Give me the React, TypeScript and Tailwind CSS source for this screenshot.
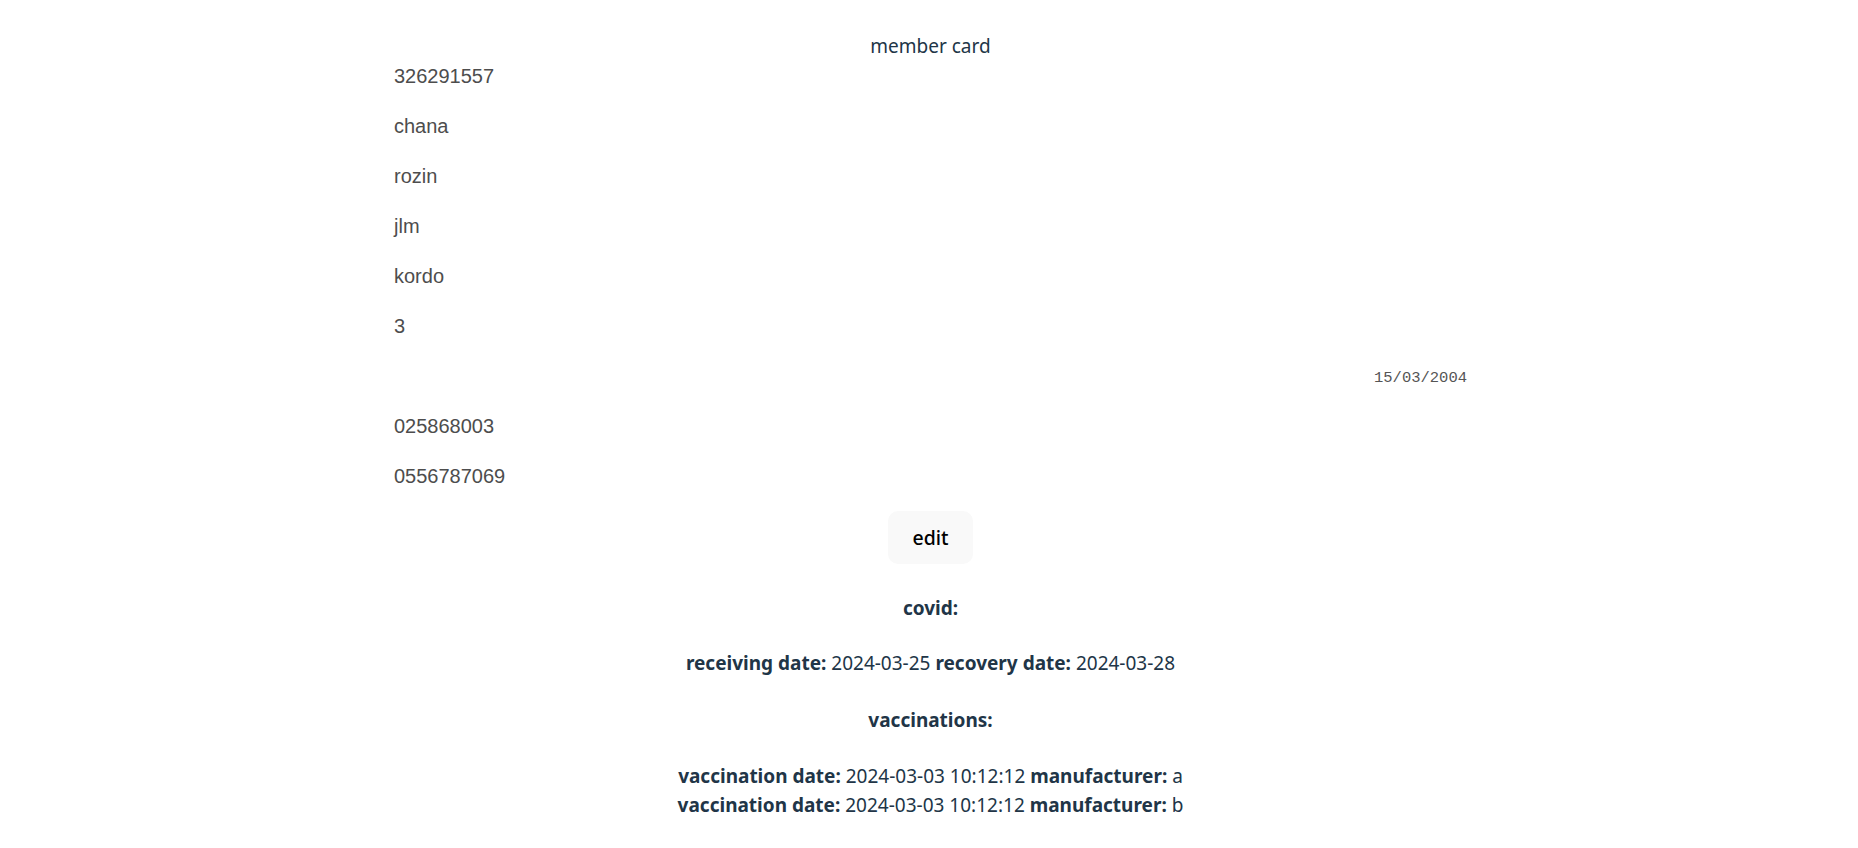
import React from "react";

const member = {
  id: "326291557",
  firstName: "chana",
  lastName: "rozin",
  city: "jlm",
  street: "kordo",
  house: "3",
  birthDate: "15/03/2004",
  phone: "025868003",
  mobile: "0556787069",
};

const vaccinations = [
  { date: "2024-03-03 10:12:12", manufacturer: "a" },
  { date: "2024-03-03 10:12:12", manufacturer: "b" },
];

export default function App() {
  const fields = [member.id, member.firstName, member.lastName, member.city, member.street, member.house];

  return (
    <div className="min-h-screen w-full bg-white text-[#213547] font-['Noto_Sans',sans-serif] text-[19px] leading-[30px]">
      <div className="mx-auto w-[1076px] pt-[31px] pl-[3px]">
        <div className="text-center">member card</div>

        {/* details */}
        <div className="flex flex-col gap-[20px] font-['Liberation_Sans',Arial,sans-serif] text-[20px] text-[#4d4d4d]">
          {fields.map((f, i) => (
            <p key={i}>{f}</p>
          ))}
          <p className="pt-[4px] h-[30px] leading-[26px] text-right font-['Liberation_Mono',monospace] text-[15.5px] text-[#555]">
            {member.birthDate}
          </p>
          <p>{member.phone}</p>
          <p>{member.mobile}</p>
        </div>

        <div className="mt-[20px] flex justify-center">
          <button className="h-[53px] w-[85px] rounded-[10px] border border-transparent bg-[#f9f9f9] pt-[1px] text-[19.5px] font-medium text-black">
            edit
          </button>
        </div>

        {/* covid */}
        <div className="mt-[29px] text-center">
          <p className="font-bold">covid:</p>
          <p className="mt-[25px]">
            <b>receiving date:</b> 2024-03-25 <b>recovery date:</b> 2024-03-28
          </p>
          <p className="mt-[27px] font-bold">vaccinations:</p>
          <div className="mt-[27px] leading-[29px]">
            {vaccinations.map((v, i) => (
              <div key={i}>
                <b>vaccination date:</b> {v.date} <b>manufacturer:</b> {v.manufacturer}
              </div>
            ))}
          </div>
        </div>
      </div>
    </div>
  );
}
